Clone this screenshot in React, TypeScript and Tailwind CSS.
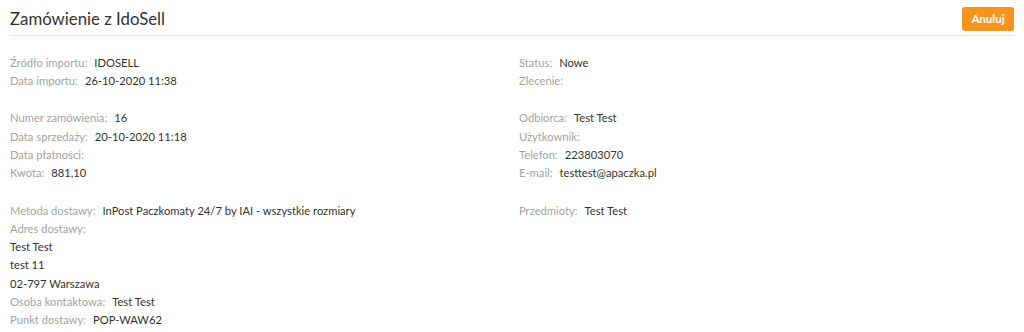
import React from 'react';

type Row = { label?: string; value?: string };

const leftSections: Row[][] = [
  [
    { label: 'Źródło importu:', value: 'IDOSELL' },
    { label: 'Data importu:', value: '26-10-2020 11:38' },
  ],
  [
    { label: 'Numer zamówienia:', value: '16' },
    { label: 'Data sprzedaży:', value: '20-10-2020 11:18' },
    { label: 'Data płatności:' },
    { label: 'Kwota:', value: '881,10' },
  ],
  [
    { label: 'Metoda dostawy:', value: 'InPost Paczkomaty 24/7 by IAI - wszystkie rozmiary' },
    { label: 'Adres dostawy:' },
    { value: 'Test Test' },
    { value: 'test 11' },
    { value: '02-797 Warszawa' },
    { label: 'Osoba kontaktowa:', value: 'Test Test' },
    { label: 'Punkt dostawy:', value: 'POP-WAW62' },
  ],
];

const rightSections: Row[][] = [
  [{ label: 'Status:', value: 'Nowe' }, { label: 'Zlecenie:' }],
  [
    { label: 'Odbiorca:', value: 'Test Test' },
    { label: 'Użytkownik:' },
    { label: 'Telefon:', value: '223803070' },
    { label: 'E-mail:', value: 'testtest@apaczka.pl' },
  ],
  [{ label: 'Przedmioty:', value: 'Test Test' }],
];

const InfoRow = ({ row }: { row: Row }) => (
  <div className="flex h-[18.3px] items-center whitespace-nowrap">
    {row.label && <span className="text-[#a3a3a3] mr-[7px]">{row.label}</span>}
    {row.value && <span className="text-[#333]">{row.value}</span>}
  </div>
);

const Column = ({ sections }: { sections: Row[][] }) => (
  <div className="flex flex-col gap-[19px]">
    {sections.map((section, i) => (
      <div key={i} className="flex flex-col">
        {section.map((row, j) => (
          <InfoRow key={j} row={row} />
        ))}
      </div>
    ))}
  </div>
);

const App = () => {
  return (
    <div className="w-[1024px] h-[332px] bg-white px-[10px] pt-[7px] text-[11.2px] font-['Lato',sans-serif] overflow-hidden">
      {/* Header */}
      <div className="flex items-center justify-between border-b border-[#e5e5e5] pb-[4px]">
        <h1 className="text-[16.8px] text-[#333] font-normal leading-[24px]">Zamówienie z IdoSell</h1>
        <button className="h-[24px] w-[52px] rounded-[3px] bg-[#f7941d] text-white text-[11.5px] font-bold">
          Anuluj
        </button>
      </div>

      {/* Details */}
      <div className="grid grid-cols-[509px_1fr] mt-[18px]">
        <Column sections={leftSections} />
        <Column sections={rightSections} />
      </div>
    </div>
  );
};

export default App;
